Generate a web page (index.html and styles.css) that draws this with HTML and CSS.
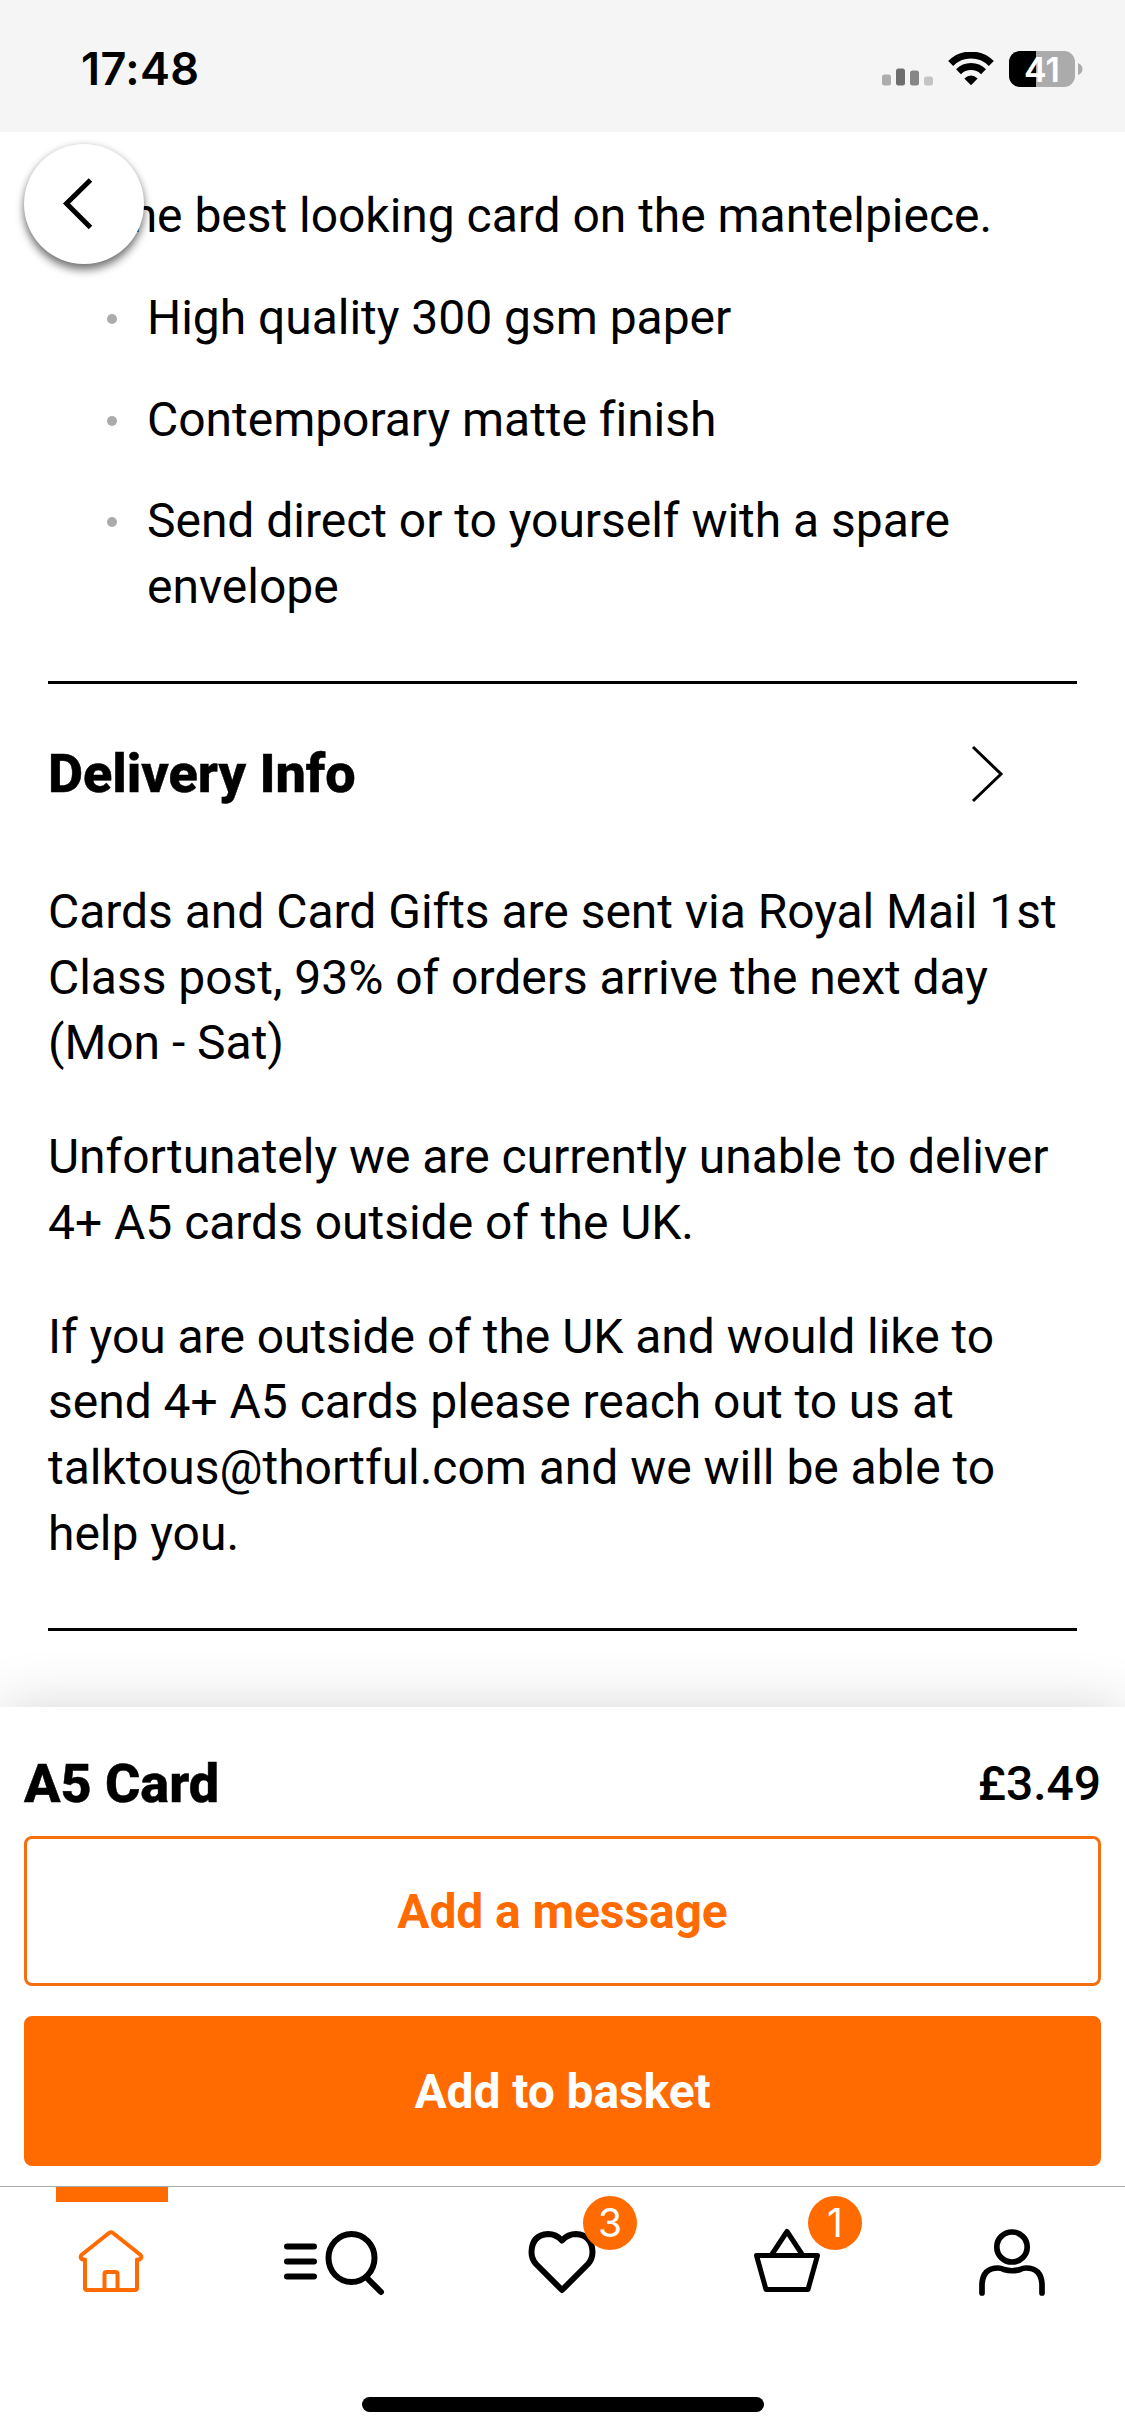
FILE: index.html
```html
<!DOCTYPE html>
<html lang="en">
<head>
<meta charset="utf-8">
<title>A5 Card</title>
<link rel="stylesheet" href="styles.css">
</head>
<body>
<div class="screen">
  <header class="status">
    <span class="time">17:48</span>
    <div class="indicators">
      <svg class="signal" width="51" height="18" viewBox="0 0 51 18">
        <rect x="0" y="6.500" width="9" height="11" rx="2.500" fill="#adadad"/>
        <rect x="14" y="0.500" width="9" height="17" rx="2.500" fill="#6e6e6e"/>
        <rect x="28" y="2.500" width="9" height="15" rx="2.500" fill="#868686"/>
        <rect x="42" y="8.500" width="9" height="9" rx="2.500" fill="#c4c4c4"/>
      </svg>
      <svg class="wifi" width="46" height="34" viewBox="0 0 46 34">
        <path d="M2.700 11.500A28.500 28.500 0 0 1 43.300 11.500" fill="none" stroke="#000" stroke-width="7"/>
        <path d="M10.500 19.700A17.700 17.700 0 0 1 35.500 19.700" fill="none" stroke="#000" stroke-width="7"/>
        <path d="M16.300 26.500Q23 20.500 29.700 26.500L23 33.200Z"/>
      </svg>
      <div class="battery"><span class="level">41</span></div>
      <svg class="nub" width="5" height="12" viewBox="0 0 5 12"><path d="M0 0Q4.500 2 4.500 6T0 12Z" fill="#ababab"/></svg>
    </div>
  </header>

  <button class="back" aria-label="Back">
    <svg width="120" height="120" viewBox="0 0 120 120"><path d="M66.500 36L42.500 59.500L66.500 83.500" fill="none" stroke="#000" stroke-width="5"/></svg>
  </button>

  <main class="content">
    <p class="lead">the best looking card on the mantelpiece.</p>
    <ul class="features">
      <li>High quality 300 gsm paper</li>
      <li>Contemporary matte finish</li>
      <li>Send direct or to yourself with a spare envelope</li>
    </ul>
    <section class="delivery">
      <div class="heading">
        <h2>Delivery Info</h2>
        <svg width="34" height="60" viewBox="0 0 34 60"><path d="M2 3L30 30L2 57" fill="none" stroke="#000" stroke-width="3"/></svg>
      </div>
      <p>Cards and Card Gifts are sent via Royal Mail 1st Class post, 93% of orders arrive the next day (Mon - Sat)</p>
      <p>Unfortunately we are currently unable to deliver 4+ A5 cards outside of the UK.</p>
      <p>If you are outside of the UK and would like to send 4+ A5 cards please reach out to us at talktous@thortful.com and we will be able to help you.</p>
    </section>
  </main>

  <section class="purchase">
    <div class="summary"><h2>A5 Card</h2><span class="price">£3.49</span></div>
    <button class="btn outline">Add a message</button>
    <button class="btn solid">Add to basket</button>
  </section>

  <nav class="tabs">
    <a class="tab active">
      <svg width="72" height="72" viewBox="0 0 72 72" fill="none" stroke="#ff6b00" stroke-width="4" stroke-linejoin="round" stroke-linecap="round"><path d="M10 33.500V62Q10 64 12 64H60Q62 64 62 62V33.500H64.500Q68 31.500 65 28.500L38 7Q36 5.500 34 7L7 28.500Q4 31.500 7.500 33.500ZM29.500 63V48Q29.500 46 31.500 46H40.500Q42.500 46 42.500 48V63"/></svg>
    </a>
    <a class="tab">
      <svg class="search" width="102" height="72" viewBox="0 0 102 72" fill="none" stroke="#000" stroke-width="6" stroke-linecap="round"><path d="M4 20.500H31M4 35.500H31M4 50.500H31M85 53L98 66"/><ellipse cx="68.500" cy="32" rx="23" ry="24"/></svg>
    </a>
    <a class="tab">
      <svg width="72" height="72" viewBox="0 0 72 72" fill="none" stroke="#000" stroke-width="6" stroke-linejoin="round"><path d="M36 14.500Q30 8 22 8Q6 9 5.500 26Q5.500 33 10 38L36 64L62 38Q66.500 33 66.500 26Q66 9 50 8Q42 8 36 14.500Z"/></svg>
      <span class="badge">3</span>
    </a>
    <a class="tab">
      <svg width="72" height="72" viewBox="0 0 72 72" fill="none" stroke="#000" stroke-width="5" stroke-linejoin="round"><path d="M5.500 29.500H66.500L57 63.500H15ZM20.500 29L36 5.500L51.500 29"/></svg>
      <span class="badge">1</span>
    </a>
    <a class="tab">
      <svg width="72" height="72" viewBox="0 0 72 72" fill="none" stroke="#000" stroke-width="5.700" stroke-linecap="round"><ellipse cx="36" cy="21" rx="15.200" ry="15"/><path d="M6 67V58Q7 42 22 42Q25 42 28 43.500Q36 46 44 43.500Q47 42 50 42Q65 42 66 58V67"/></svg>
    </a>
  </nav>
  <div class="home-bar"></div>
</div>
</body>
</html>
```
FILE: styles.css
```css
* { box-sizing: border-box; margin: 0; padding: 0; }

body {
  background: #fff;
  color: #000;
  font: 400 48px/65.76px Roboto, sans-serif;
  letter-spacing: -.03px;
}

.screen {
  position: relative;
  display: flex;
  flex-direction: column;
  width: 1125px;
  height: 2436px;
  overflow: hidden;
}

.status {
  display: flex;
  justify-content: space-between;
  align-items: center;
  height: 132px;
  padding: 6px 42px 0 81px;
  background: #f5f5f5;
}

.time { font: 600 45px/54px Inter, sans-serif; letter-spacing: .4px; }

.indicators { display: flex; align-items: center; }
.signal { margin: 15px 15px 0 0; }
.wifi { margin-right: 15px; }

.battery {
  width: 66px;
  height: 36px;
  border-radius: 11px;
  background: linear-gradient(90deg, #000 27px, #ababab 27px);
  text-align: center;
}

.level { display: block; color: #fff; font: 600 34px/37px Inter, sans-serif; }
.nub { margin-left: 3px; }

.back {
  position: absolute;
  left: 24px;
  top: 144px;
  z-index: 2;
  width: 120px;
  height: 120px;
  border: 0;
  border-radius: 50%;
  background: #fff;
  box-shadow: 0 6px 9px rgba(0, 0, 0, .5), 0 0 6px rgba(0, 0, 0, .15);
}

.back svg { display: block; }

.content { height: 1575px; padding: 51px 48px 0; }
.lead { padding-left: 67px; white-space: nowrap; }
.features { list-style: none; padding-bottom: 61px; border-bottom: 3px solid #000; }

.features li {
  display: grid;
  grid-template-columns: 10px 1fr;
  column-gap: 30px;
  margin-top: 36px;
  padding-left: 59px;
}

.features li::before {
  content: "";
  width: 10px;
  height: 10px;
  margin-top: 29px;
  border-radius: 50%;
  background: #ababab;
}

h2 { font-weight: 800; font-size: 54px; line-height: 64px; -webkit-text-stroke: .5px #000; }

.delivery { padding: 58px 0 61px; border-bottom: 3px solid #000; }

.heading {
  display: flex;
  justify-content: space-between;
  align-items: center;
  height: 64px;
  margin-bottom: 73px;
  padding-right: 72px;
}

.delivery p + p { margin-top: 48px; }

.purchase {
  position: relative;
  display: flex;
  flex-direction: column;
  height: 479px;
  padding: 45px 24px 0;
  background: #fff;
  box-shadow: 0 0 54px rgba(0, 0, 0, .16);
}

.summary {
  display: flex;
  justify-content: space-between;
  align-items: center;
  height: 64px;
  margin-bottom: 20px;
}

.price { font-weight: 500; }

.btn {
  height: 150px;
  padding-top: 2px;
  border: 3px solid #f36f10;
  border-radius: 8px;
  background: #fff;
  color: #ff6b00;
  font: 700 48px/60px Roboto, sans-serif;
  letter-spacing: -.1px;
}

.solid { margin-top: 30px; border-color: #ff6b00; background: #ff6b00; color: #fff; }

.tabs {
  position: relative;
  display: grid;
  grid-template-columns: repeat(5, 1fr);
  height: 211px;
  border-top: 1px solid #aaa;
  background: #fff;
}

.tab { position: relative; display: flex; justify-content: center; padding: 39px 2px 0 0; }
.tab svg { flex: none; }
.active { padding-right: 3px; }
.search { margin-left: -5px; }

.active::before {
  content: "";
  position: absolute;
  left: 56px;
  top: 0;
  width: 112px;
  height: 15px;
  background: #ff6b00;
}

.badge {
  position: absolute;
  left: 133px;
  top: 9px;
  width: 54px;
  height: 54px;
  border-radius: 50%;
  background: #ff6b00;
  color: #fff;
  font: 400 39px/54px Inter, sans-serif;
  text-align: center;
}

.home-bar { position: relative; width: 402px; height: 15px; margin: 0 auto; border-radius: 8px; background: #000; }
```
